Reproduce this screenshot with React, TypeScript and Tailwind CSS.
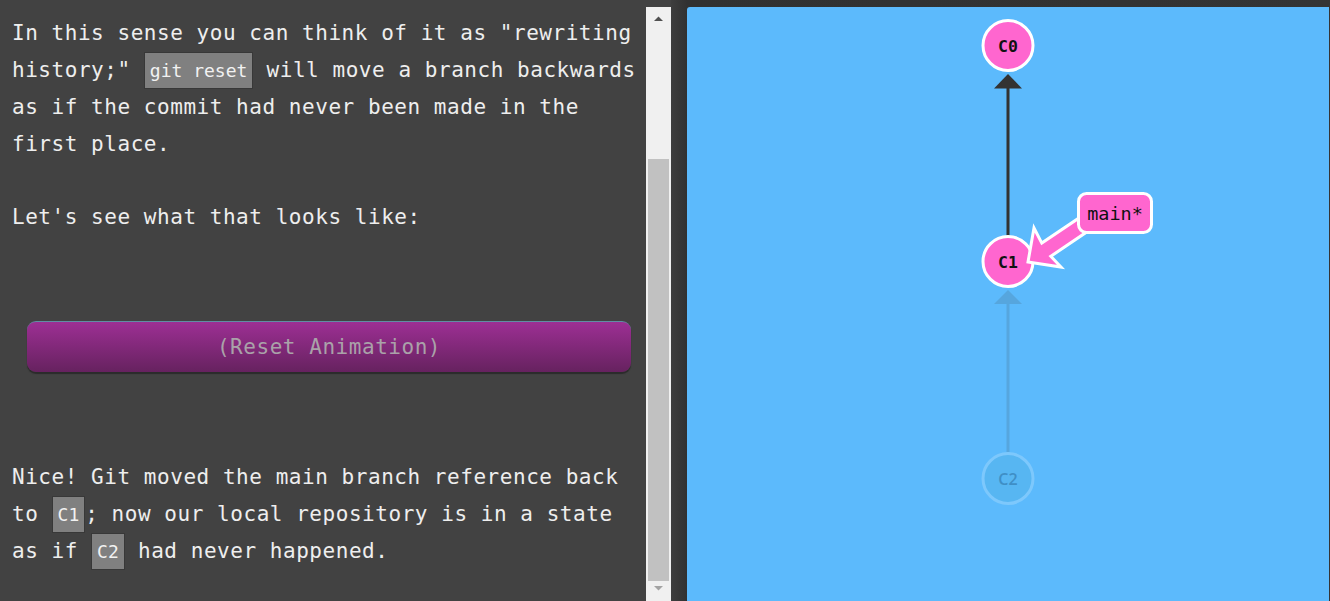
const mono = "font-['DejaVu_Sans_Mono',monospace]";

function Code({ children }: { children: string }) {
  return (
    <span className="bg-[#808080] border border-[#383838] px-[5px] py-[7px] text-[18px] tracking-normal text-[#f2f2f2]">
      {children}
    </span>
  );
}

function Scrollbar() {
  return (
    <div className="w-[25px] shrink-0 bg-[#424242] pt-[7px] flex flex-col">
      <div className="flex-1 bg-[#f0f0f0] flex flex-col items-center">
        <svg width="25" height="18" viewBox="0 0 25 18" className="shrink-0">
          <polygon points="8,14 12.5,9.5 17,14" fill="#505050" />
        </svg>
        <div className="mt-[134px] h-[422px] w-[21px] shrink-0 bg-[#c1c1c1]" />
        <svg width="25" height="18" viewBox="0 0 25 18" className="shrink-0">
          <polygon points="8,5 17,5 12.5,9.5" fill="#a3a3a3" />
        </svg>
      </div>
    </div>
  );
}

function Graph() {
  return (
    <svg
      className="absolute inset-0 h-full w-full"
      viewBox="687 7 642 594"
      preserveAspectRatio="xMinYMin slice"
    >
      {/* faded edge C2 -> C1 */}
      <line x1="1008" y1="452" x2="1008" y2="303" stroke="#56a6de" strokeWidth="3" />
      <polygon points="1008,290 1022,304 994,304" fill="#56a6de" />
      {/* edge C1 -> C0 */}
      <line x1="1008" y1="236" x2="1008" y2="87" stroke="#333" strokeWidth="3" />
      <polygon points="1008,74 1022,88.5 994,88.5" fill="#333" />

      <circle cx="1008" cy="45.5" r="25" fill="#ff66cf" stroke="#fff" strokeWidth="3" />
      <text x="1008" y="51.5" textAnchor="middle" fontFamily="DejaVu Sans Mono, monospace" fontSize="16.5" fontWeight="600" fill="#111">
        C0
      </text>

      <circle cx="1008" cy="261.5" r="25" fill="#ff66cf" stroke="#fff" strokeWidth="3" />
      <text x="1008" y="267.5" textAnchor="middle" fontFamily="DejaVu Sans Mono, monospace" fontSize="16.5" fontWeight="600" fill="#111">
        C1
      </text>

      <circle cx="1008" cy="478.5" r="25" fill="#57b6f2" stroke="#7dc8fc" strokeWidth="3" />
      <text x="1008" y="484.5" textAnchor="middle" fontFamily="Open Sans, sans-serif" fontSize="16" fontWeight="600" fill="#3f8fc6">
        C2
      </text>

      {/* branch arrow */}
      <polygon
        points="1028,262 1061,267 1050.8,256.3 1088.1,231.1 1079.1,217.9 1041.8,243.1 1034,228"
        fill="#ff66cf"
        stroke="#fff"
        strokeWidth="3"
        strokeLinejoin="miter"
      />
      <rect x="1078.5" y="193.5" width="73" height="39" rx="8" fill="#ff66cf" stroke="#fff" strokeWidth="3" />
      <text x="1115" y="219.5" textAnchor="middle" fontFamily="DejaVu Sans Mono, monospace" fontSize="18.5" fill="#111">
        main*
      </text>
    </svg>
  );
}

export default function App() {
  return (
    <div className="flex h-[601px] w-[1330px] overflow-hidden bg-[#424242]">
      <div
        className={`${mono} w-[646px] shrink-0 px-3 pt-[15px] text-[21px] leading-[36.5px] tracking-[0.54px] text-[#eeeeee]`}
      >
        <p className="w-[630px]">
          In this sense you can think of it as "rewriting history;" <Code>git reset</Code> will move a
          branch backwards as if the commit had never been made in the first place.
        </p>
        <p className="mt-[36.5px]">Let's see what that looks like:</p>

        <button
          type="button"
          className="mt-[86px] ml-[15px] flex h-[51px] w-[604px] items-center justify-center rounded-[9px] border-t border-[#5f8ea4] bg-[linear-gradient(to_bottom,#9d2f94,#66225f)] text-[#aaa2a9] shadow-[0_2px_1px_#2b2b2b]"
        >
          (Reset Animation)
        </button>

        <p className="mt-[87px] w-[630px]">
          Nice! Git moved the main branch reference back to <Code>C1</Code>; now our local repository
          is in a state as if <Code>C2</Code> had never happened.
        </p>
      </div>

      <Scrollbar />

      <div className="flex-1 bg-[linear-gradient(90deg,#3e3e3e_0px,#313131_16px,#343434_100%)] pl-[16px] pr-[1px] pt-[7px]">
        <div className="relative h-full rounded-tl-[3px] bg-[#5cbafc] overflow-hidden">
          <Graph />
        </div>
      </div>
    </div>
  );
}
